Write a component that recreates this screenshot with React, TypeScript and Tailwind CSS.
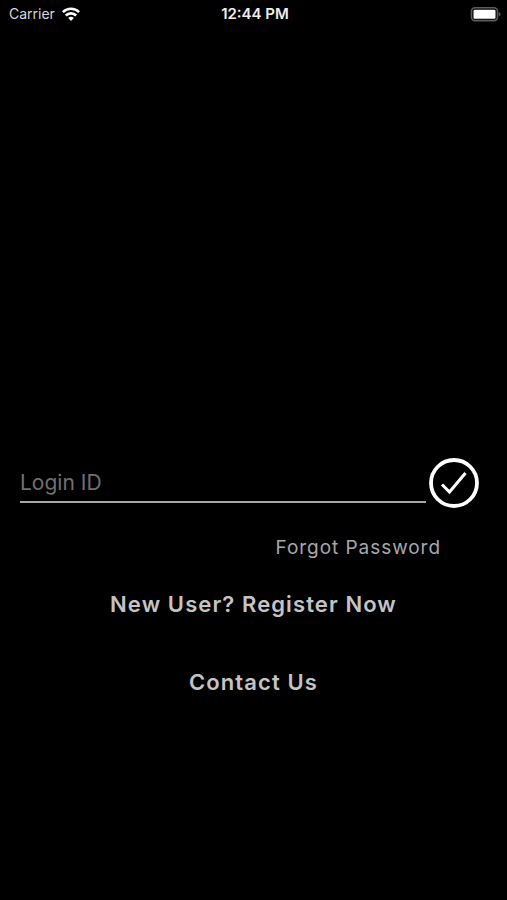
function WifiIcon() {
  return (
    <svg viewBox="0 0 18 14" className="h-3.5 w-[18px]" aria-hidden="true" fill="none" stroke="white" strokeWidth="2.6">
      <path d="M0.9 5.1a11.6 11.6 0 0 1 16.2 0" />
      <path d="M3.8 8.5a7.4 7.4 0 0 1 10.4 0" />
      <path d="M9 14 6.2 11.1a4 4 0 0 1 5.6 0Z" fill="white" stroke="none" />
    </svg>
  );
}

function BatteryIcon() {
  return (
    <svg viewBox="0 0 31 15" className="h-[15px] w-[31px]" aria-hidden="true">
      <rect x="1.5" y="0.8" width="26" height="12.8" rx="3.5" fill="none" stroke="#5c5c5c" strokeWidth="1.6" />
      <rect x="3.5" y="2.7" width="22" height="9" rx="1.2" fill="white" />
      <path d="M28.8 4.9c2.4 1 2.4 3.6 0 4.6Z" fill="#5c5c5c" />
    </svg>
  );
}

function CheckCircleIcon() {
  return (
    <svg viewBox="0 0 50 50" className="size-[50px]" aria-hidden="true" fill="none" stroke="white">
      <circle cx="25" cy="25" r="23" strokeWidth="3.8" />
      <path d="M13 26.5 20.5 34 36.5 15" strokeWidth="3.1" />
    </svg>
  );
}

function StatusBar() {
  return (
    <header className="grid h-7 grid-cols-3 items-center pr-1.5 pl-[9px] text-white">
      <div className="flex items-center gap-[7px]">
        <span className="text-sm text-[#d8d8d8]">Carrier</span>
        <WifiIcon />
      </div>
      <span className="text-center text-[15px] leading-5 font-semibold text-[#eeeeee]">12:44 PM</span>
      <div className="flex justify-end">
        <BatteryIcon />
      </div>
    </header>
  );
}

export default function App() {
  return (
    <div className="flex min-h-screen flex-col bg-black font-['Inter','Liberation_Sans',sans-serif]">
      <StatusBar />
      <main className="flex flex-col pt-[430px] pb-10">
        <form
          className="flex items-center gap-[3px] pr-7 pl-5"
          onSubmit={(event) => event.preventDefault()}
        >
          <input
            type="text"
            aria-label="Login ID"
            placeholder="Login ID"
            className="h-10 min-w-0 flex-1 rounded-none border-b-2 border-[#a6a6a6] bg-transparent text-[21px] text-white outline-none placeholder:text-[#707070]"
          />
          <button type="submit" aria-label="Continue" className="shrink-0 rounded-full">
            <CheckCircleIcon />
          </button>
        </form>
        <a href="#forgot" className="mt-6 mr-[66px] self-end text-[19px] leading-8 tracking-wider text-[#a8a8a8]">
          Forgot Password
        </a>
        <a href="#register" className="mt-6 self-center text-[22px] leading-8 font-semibold tracking-wider text-[#c4c4c4]">
          New User? Register Now
        </a>
        <a href="#contact" className="mt-[46px] self-center text-[22px] leading-8 font-semibold tracking-wider text-[#c4c4c4]">
          Contact Us
        </a>
      </main>
    </div>
  );
}
